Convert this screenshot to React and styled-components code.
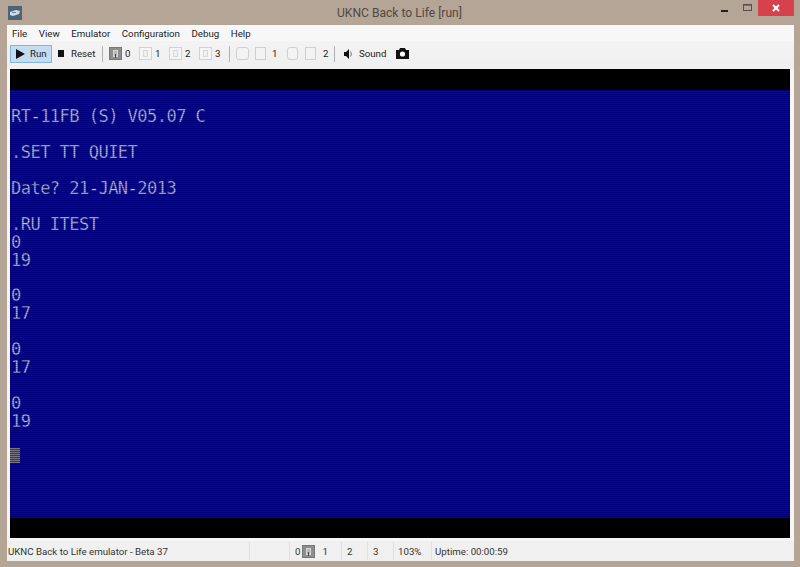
import React from "react";
import styled, { createGlobalStyle } from "styled-components";

const Global = createGlobalStyle`
  html, body { margin: 0; padding: 0; width: 800px; height: 567px; overflow: hidden; background: #b5a596; }
  * { box-sizing: border-box; }
`;

const Frame = styled.div`
  width: 800px; height: 567px; display: flex; flex-direction: column;
  background: #b5a596; font-family: Roboto, "Liberation Sans", sans-serif;
  font-size: 9.7px; color: #222; padding: 0 6px 6px 7px;
`;
const TitleBar = styled.div`
  height: 25px; flex: none; display: flex; align-items: center; position: relative;
`;
const AppIcon = styled.svg`width: 14px; height: 14px; margin: 0 0 0 1px;`;
const Title = styled.div`
  position: absolute; left: 0; right: 0; top: 6px; text-align: center; padding-right: 2px;
  font-size: 12.1px; color: #4f4943;
`;
const WindowButtons = styled.div`
  position: absolute; right: 0; top: 0; display: flex; align-items: flex-start;
`;
const WinBtn = styled.div`
  width: ${p => p.$w}px; height: 16px; display: flex; align-items: center; justify-content: center;
  background: ${p => p.$bg || "transparent"};
`;
const Client = styled.div`flex: 1; display: flex; flex-direction: column; background: #f0f0f0; min-height: 0;`;
const MenuBar = styled.div`
  height: 16px; flex: none; display: flex; align-items: center; background: #f7f7f7; padding-left: 5px; gap: 11.6px;
`;
const MenuItem = styled.span`color: #222;`;
const Toolbar = styled.div`
  height: 28px; flex: none; display: flex; align-items: center; padding: 0 0 3px 3px;
  background: linear-gradient(#f3f3f3, #efefef);
`;
const ToolButton = styled.div`
  height: 18px; display: flex; align-items: center; gap: ${p => p.$gap ?? 5}px; padding-left: ${p => p.$pad ?? 5}px;
  ${p => p.$w && `width: ${p.$w}px; flex: none;`}
  color: #222;
  svg { flex: none; }
  ${p => p.$active && "background: #c4dcf2; border: 1px solid #86b4dd;"}
`;
const Sep = styled.div`width: 1px; height: 16px; background: #b0b0b0; margin: 0 3px; flex: none;`;
const ScreenWrap = styled.div`flex: 1; padding: 0 4px 3px 3px; display: flex; min-height: 0; background: #f6f6f6;`;
const Screen = styled.div`
  flex: 1; background: #000; padding: 21px 0 20px; display: flex; min-height: 0;
`;
const Blue = styled.div`
  flex: 1; position: relative; padding: 18px 0 0 1px; overflow: hidden;
  background: repeating-linear-gradient(#00007e 0 1px, #000b90 1px 2px);
`;
const Line = styled.div`
  height: 17.94px; line-height: 17.94px; font-family: "DejaVu Sans Mono", monospace; font-size: 17px;
  letter-spacing: -0.52px; color: #d0d0d0; white-space: pre;
  -webkit-text-stroke: 0.3px #000a88;
`;
const Scan = styled.div`
  position: absolute; inset: 0;
  background: repeating-linear-gradient(rgba(0, 0, 126, 0.3) 0 1px, transparent 1px 2px);
`;
const Cursor = styled.div`
  position: absolute; left: 0; top: 358px; width: 10px; height: 15px;
  background: repeating-linear-gradient(#a8a880 0 1px, #3a3a4c 1px 2px);
`;
const StatusBar = styled.div`
  height: 20px; flex: none; display: flex; align-items: center; background: #f0f0f0; color: #333;
`;
const StatusCell = styled.div`
  width: ${p => p.$w}px; height: 18px; display: flex; align-items: center; gap: ${p => p.$gap ?? 3}px;
  padding-left: ${p => p.$pad ?? 0}px; flex: ${p => p.$grow ? 1 : "none"};
  border-right: ${p => p.$line === false ? "none" : "1px solid #e0e0e0"};
`;
const StatusGap = styled.span`width: 3px;`;

const Tape = ({ on }) => (
  <svg width="13" height="13" viewBox="0 0 13 13">
    <rect x=".5" y=".5" width="12" height="12" fill={on ? "#8e8e8e" : "#f5f5f5"} stroke={on ? "#777" : "#d2d2d2"} />
    <rect x="4.5" y="3.5" width="4" height="6" fill={on ? "#b8b8b8" : "#f0f0f0"} stroke={on ? "#d8d8d8" : "#d8d8d8"} />
    {on && <rect x="6" y="7" width="1" height="4" fill="#444" />}
  </svg>
);
const Hdd = ({ round, w = 11 }) => (
  <svg width={w} height="15" viewBox={`0 0 ${w} 15`}>
    <rect x=".5" y="1.5" width={w - 1} height="12" rx={round ? 2.5 : 0} fill="#f3f3f3" stroke="#cfcfcf" />
  </svg>
);

const lines = [
  "RT-11FB (S) V05.07 C", "", ".SET TT QUIET", "", "Date? 21-JAN-2013", "", ".RU ITEST",
  "0", "19", "", "0", "17", "", "0", "17", "", "0", "19",
];

export default function App() {
  return (
    <>
      <Global />
      <Frame>
        <TitleBar>
          <AppIcon viewBox="0 0 14 14">
            <rect x="0" y="0" width="14" height="14" fill="#4c6476" />
            <path d="M2 6l6-2 4 1-1 3-6 2-3-1z" fill="#cfdde4" />
            <rect x="4" y="6" width="4" height="1" fill="#6d8799" />
          </AppIcon>
          <Title>UKNC Back to Life [run]</Title>
          <WindowButtons>
            <WinBtn $w={24}>
              <svg width="8" height="8" viewBox="0 0 8 8"><rect width="7" height="2" y="6" fill="#222" /></svg>
            </WinBtn>
            <WinBtn $w={21}>
              <svg width="10" height="8" viewBox="0 0 10 8"><rect x=".5" y=".5" width="8" height="6" fill="none" stroke="#57504a" /><rect width="9" height="2" fill="#57504a" opacity=".6" /></svg>
            </WinBtn>
            <WinBtn $w={36} $bg="#d5424c">
              <svg width="8" height="8" viewBox="0 0 8 8"><path d="M1 1l6 6M7 1l-6 6" stroke="#fff" strokeWidth="2" /></svg>
            </WinBtn>
          </WindowButtons>
        </TitleBar>
        <Client>
          <MenuBar>
            {["File", "View", "Emulator", "Configuration", "Debug", "Help"].map(m => <MenuItem key={m}>{m}</MenuItem>)}
          </MenuBar>
          <Toolbar>
            <ToolButton $active $gap={5} $pad={5} $w={42}>
              <svg width="9" height="10" viewBox="0 0 9 10"><path d="M0 0l9 5-9 5z" fill="#111" /></svg>Run
            </ToolButton>
            <ToolButton $gap={7} $pad={6} $w={47}>
              <svg width="6" height="7" viewBox="0 0 6 7"><rect width="6" height="7" fill="#111" /></svg>Reset
            </ToolButton>
            <Sep />
            {[0, 1, 2, 3].map(n => <ToolButton key={n} $gap={3} $pad={3} $w={30}><Tape on={n === 0} />{n}</ToolButton>)}
            <Sep />
            <ToolButton $gap={6} $pad={3} $w={51}><Hdd round w={13} /><Hdd />1</ToolButton>
            <ToolButton $gap={7} $pad={3} $w={47}><Hdd round /><Hdd />2</ToolButton>
            <Sep />
            <ToolButton $gap={5} $pad={6} $w={54}>
              <svg width="10" height="10" viewBox="0 0 10 10"><path d="M0 3h2l3-3v10l-3-3H0z" fill="#111" /><path d="M6.5 2.5q1.8 2.5 0 5" fill="none" stroke="#777" /></svg>
              Sound
            </ToolButton>
            <ToolButton $pad={4}>
              <svg width="13" height="11" viewBox="0 0 13 11"><path d="M0 2h3l1-2h5l1 2h3v9H0z" fill="#111" /><circle cx="6.5" cy="6" r="2.6" fill="#fff" /></svg>
            </ToolButton>
          </Toolbar>
          <ScreenWrap>
            <Screen>
              <Blue>
                {lines.map((l, i) => <Line key={i}>{l}</Line>)}
                <Cursor />
                <Scan />
              </Blue>
            </Screen>
          </ScreenWrap>
          <StatusBar>
            <StatusCell $w={243} $pad={1}>UKNC Back to Life emulator - Beta 37</StatusCell>
            <StatusCell $w={40} />
            <StatusCell $w={52} $pad={5} $gap={2}>0<Tape on /><StatusGap />1</StatusCell>
            <StatusCell $w={26} $pad={5}>2</StatusCell>
            <StatusCell $w={26} $pad={5}>3</StatusCell>
            <StatusCell $w={38} $pad={4}>103%</StatusCell>
            <StatusCell $grow $line={false} $pad={3}>Uptime: 00:00:59</StatusCell>
          </StatusBar>
        </Client>
      </Frame>
    </>
  );
}
